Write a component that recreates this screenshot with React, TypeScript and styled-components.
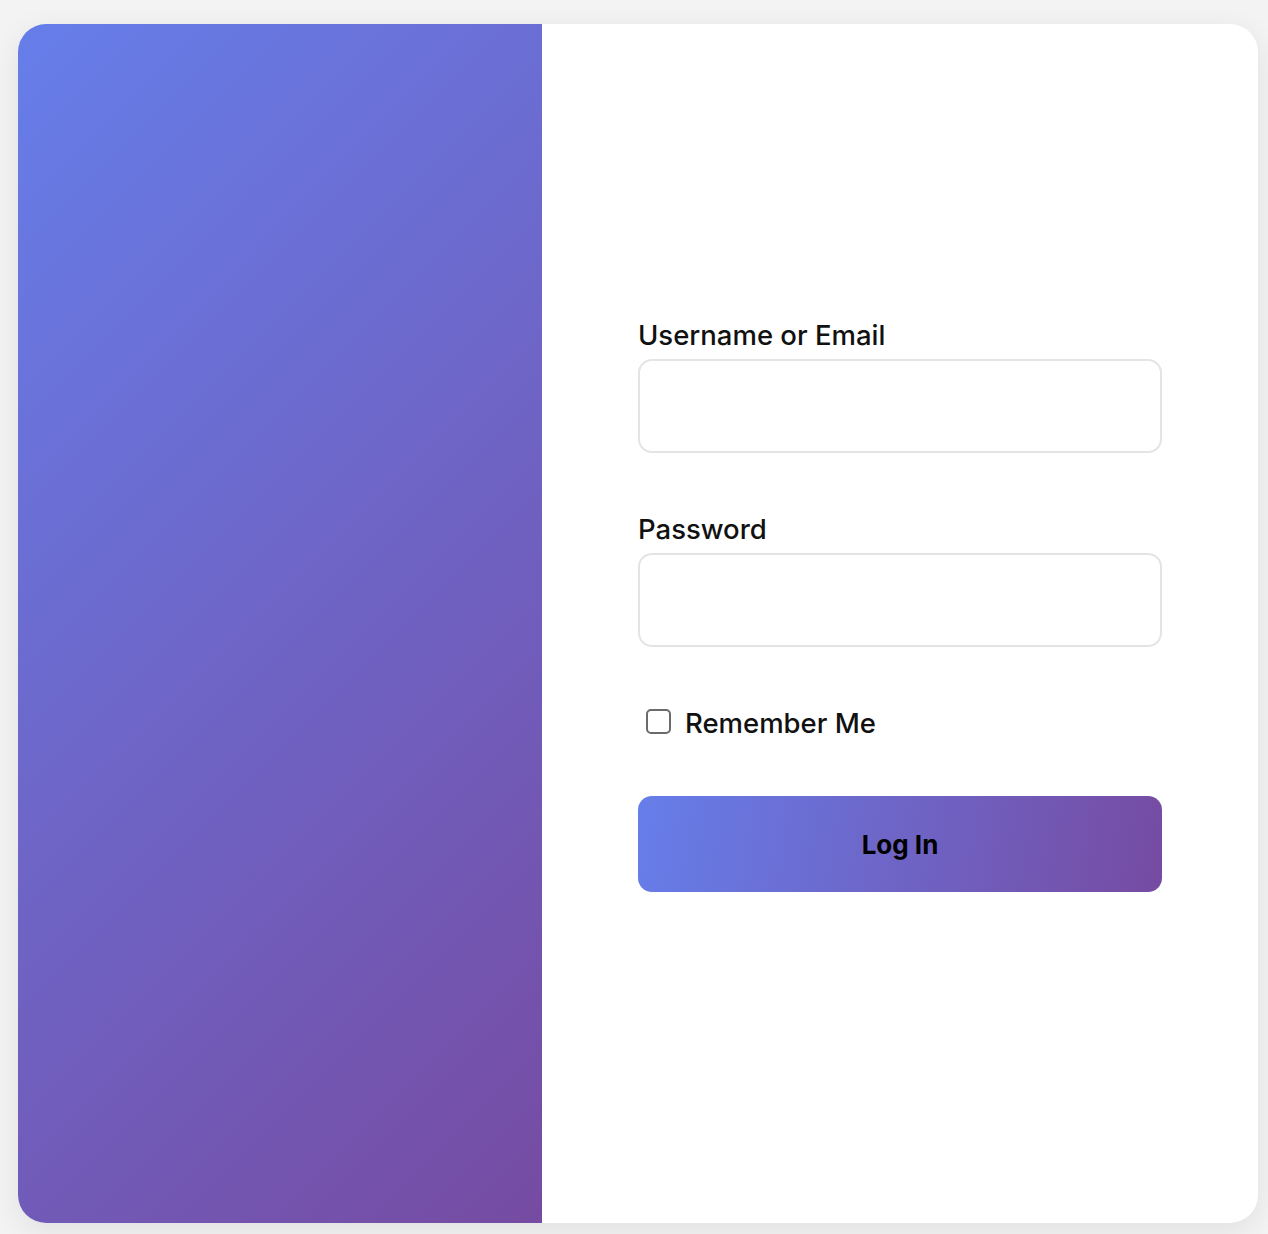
import React from "react";
import styled, { createGlobalStyle } from "styled-components";

const Global = createGlobalStyle`
  html, body { margin: 0; padding: 0; }
  body {
    background: #f3f3f3;
    font-family: Inter, "Noto Sans", "Liberation Sans", sans-serif;
  }
`;

const Page = styled.div`
  padding: 24px 10px 11px 18px;
  height: 1234px;
  box-sizing: border-box;
`;

const Card = styled.div`
  display: flex;
  height: 1199px;
  background: #ffffff;
  border-radius: 28px;
  overflow: hidden;
  box-shadow: 0 8px 30px rgba(0, 0, 0, 0.08);
`;

const Hero = styled.div`
  flex: 0 0 524px;
  background: linear-gradient(135deg, #667eea 0%, #764ba2 100%);
`;

const FormSide = styled.div`
  flex: 1;
  display: flex;
  justify-content: center;
  padding-top: 289px;
`;

const Form = styled.form`
  width: 524px;
  display: flex;
  flex-direction: column;
`;

const Field = styled.div`
  display: flex;
  flex-direction: column;
  margin-bottom: 54px;
`;

const Label = styled.label`
  font-size: 27.5px;
  font-weight: 500;
  color: #111111;
  line-height: 44px;
  margin-bottom: 2px;
`;

const Input = styled.input`
  height: 94px;
  box-sizing: border-box;
  border: 2px solid #e4e4e7;
  border-radius: 14px;
  font-size: 26px;
  padding: 0 20px;
  outline: none;
  background: #fff;
`;

const CheckRow = styled.label`
  display: flex;
  align-items: center;
  gap: 14px;
  padding-left: 8px;
  margin-top: 2px;
  margin-bottom: 53px;
  font-size: 27.5px;
  font-weight: 500;
  color: #111111;
  line-height: 40px;
`;

const Box = styled.input`
  appearance: none;
  width: 25px;
  height: 25px;
  margin: 0;
  border: 2px solid #6b6b6b;
  border-radius: 5px;
  background: #fff;
  box-sizing: border-box;
  position: relative;
  top: -2px;
`;

const Button = styled.button`
  height: 96px;
  border: none;
  border-radius: 14px;
  background: linear-gradient(100deg, #667eea 0%, #764ba2 100%);
  color: #000;
  font-family: inherit;
  font-size: 26px;
  font-weight: 700;
  cursor: pointer;
`;

export default function App() {
  return (
    <>
      <Global />
      <Page>
        <Card>
          <Hero />
          <FormSide>
            <Form onSubmit={(e) => e.preventDefault()}>
              <Field>
                <Label htmlFor="user">Username or Email</Label>
                <Input id="user" type="text" />
              </Field>
              <Field>
                <Label htmlFor="pass">Password</Label>
                <Input id="pass" type="password" />
              </Field>
              <CheckRow>
                <Box type="checkbox" />
                Remember Me
              </CheckRow>
              <Button type="submit">Log In</Button>
            </Form>
          </FormSide>
        </Card>
      </Page>
    </>
  );
}
